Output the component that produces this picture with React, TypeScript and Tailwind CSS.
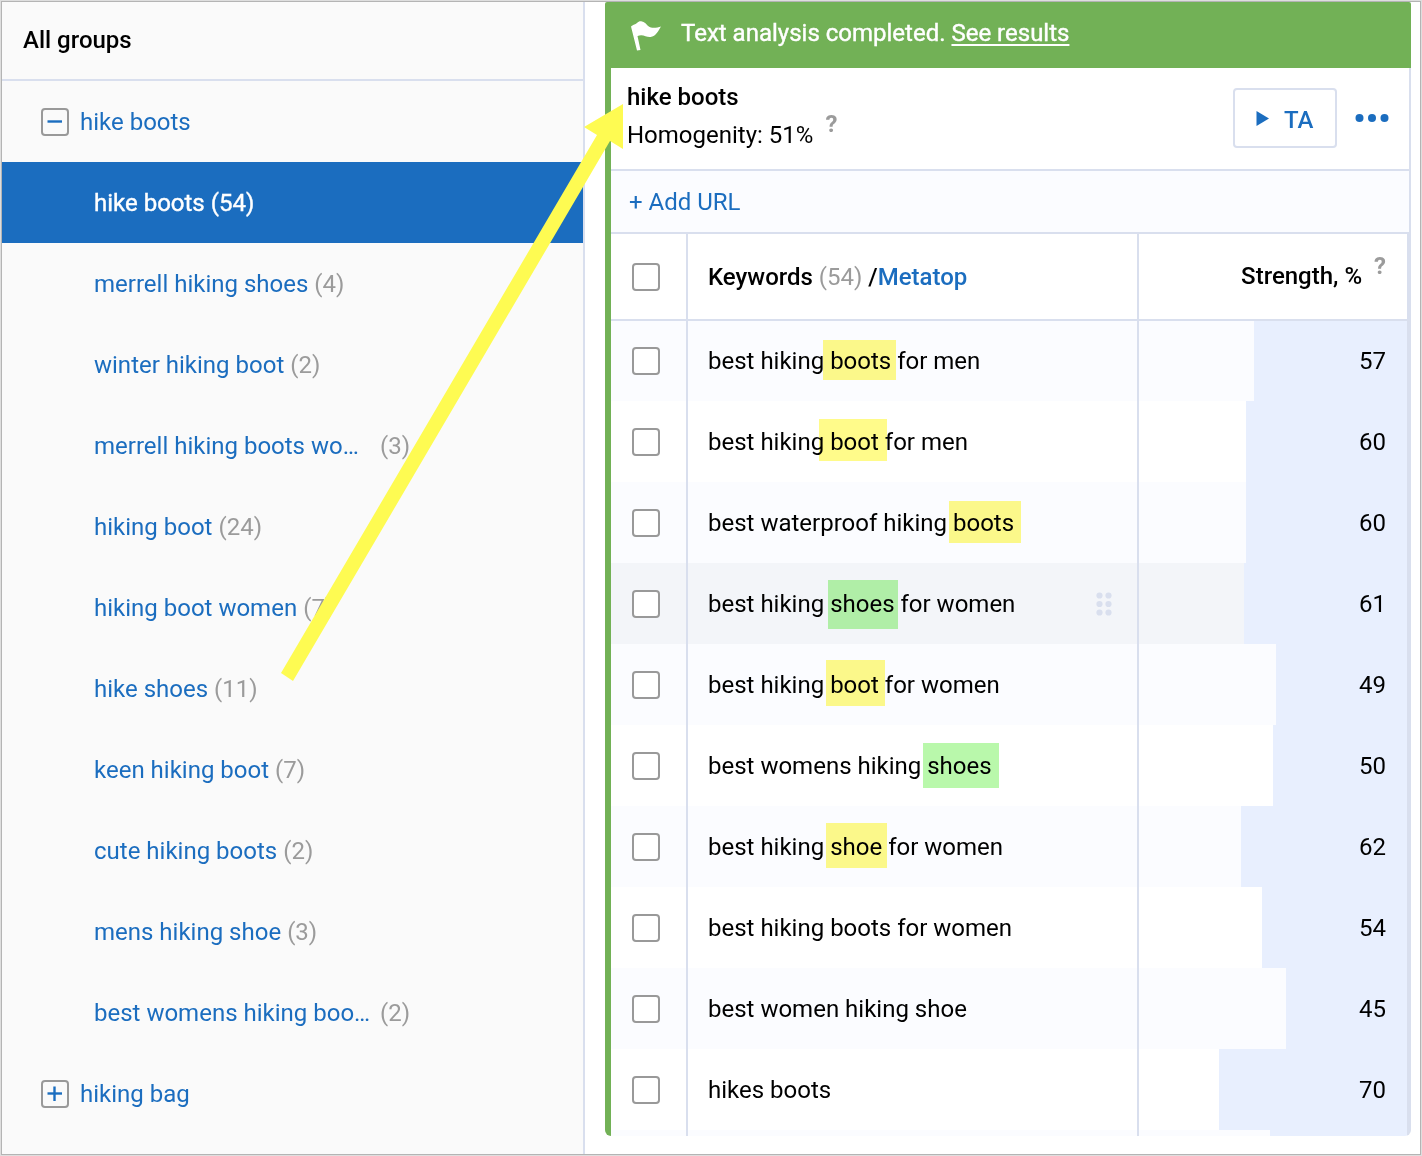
import React from "react";

type Group = { name: string; count: number; clipped?: boolean };

const groups: Group[] = [
  { name: "merrell hiking shoes", count: 4 },
  { name: "winter hiking boot", count: 2 },
  { name: "merrell hiking boots wo…", count: 3, clipped: true },
  { name: "hiking boot", count: 24 },
  { name: "hiking boot women", count: 7 },
  { name: "hike shoes", count: 11 },
  { name: "keen hiking boot", count: 7 },
  { name: "cute hiking boots", count: 2 },
  { name: "mens hiking shoe", count: 3 },
  { name: "best womens hiking boo…", count: 2, clipped: true },
];

type Keyword = { before: string; mark?: string; after?: string; markClass?: string; strength: number; active?: boolean };

const yellow = "bg-[#fffb8a]";
const green = "bg-[#b9f8ab]";

const keywords: Keyword[] = [
  { before: "best hiking ", mark: "boots", after: " for men", markClass: `${yellow} -ml-[7px] -mr-[5px] pl-[7px] pr-[5px] pt-[7px] pb-[5px]`, strength: 57 },
  { before: "best hiking ", mark: "boot", after: " for men", markClass: `${yellow} -ml-[11px] -mr-[8px] pl-[11px] pr-[8px] pt-[9px] pb-[5px]`, strength: 60 },
  { before: "best waterproof hiking ", mark: "boots", markClass: `${yellow} -ml-[4px] pl-[4px] pr-[7px] pt-[8px] pb-[6px]`, strength: 60 },
  { before: "best hiking ", mark: "shoes", after: " for women", markClass: `${green} -ml-[2px] -mr-[3px] pl-[2px] pr-[3px] pt-[10px] pb-[11px]`, strength: 61, active: true },
  { before: "best hiking ", mark: "boot", after: " for women", markClass: `${yellow} -ml-[4px] -mr-[6px] pl-[4px] pr-[6px] pt-[11px] pb-[7px]`, strength: 49 },
  { before: "best womens hiking ", mark: "shoes", markClass: `${green} -ml-[4px] pl-[4px] pr-[7px] pt-[9px] pb-[8px]`, strength: 50 },
  { before: "best hiking ", mark: "shoe", after: " for women", markClass: `${yellow} -ml-[4px] -mr-[5px] pl-[4px] pr-[5px] pt-[10px] pb-[7px]`, strength: 62 },
  { before: "best hiking boots for women", strength: 54 },
  { before: "best women hiking shoe", strength: 45 },
  { before: "hikes boots", strength: 70 },
];

function Toggle({ open, label }: { open: boolean; label: string }) {
  return (
    <button
      type="button"
      aria-label={label}
      aria-expanded={open}
      className="flex size-7 shrink-0 items-center justify-center rounded border-2 border-[#999] text-[#1b6dbf]"
    >
      <svg viewBox="0 0 16 16" className="size-4" stroke="currentColor" strokeWidth="2.4">
        <path d="M0.5 7.500H15" />
        {!open && <path d="M7.500 0.500V15" />}
      </svg>
    </button>
  );
}

function Check({ label }: { label: string }) {
  return (
    <input
      type="checkbox"
      aria-label={label}
      className="mx-auto block size-7 appearance-none rounded border-2 border-[#999] bg-white checked:bg-[#1b6dbf]"
    />
  );
}

function Hint({ label }: { label: string }) {
  return (
    <button type="button" aria-label={label} className="leading-6 font-bold text-[#9b9b9b]">
      ?
    </button>
  );
}

function Sidebar() {
  return (
    <nav aria-label="Groups" className="w-[583px] shrink-0 border-r-2 border-[#d9dfee] bg-[#fafafa] text-[#1b6dbf]">
      <h2 className="h-[79px] border-b-2 border-[#d9dfee] px-[21px] pt-[20px] font-medium leading-9 text-black">All groups</h2>
      <div className="flex h-[81px] items-center gap-[11px] pl-[39px]">
        <Toggle open label="Collapse hike boots" />
        <a href="#hike-boots">hike boots</a>
      </div>
      <ul>
        <li className="flex h-[81px] items-center bg-[#1b6dbf] pl-[92px] text-white">
          <a href="#hike-boots-54" className="[-webkit-text-stroke:0.4px_white]">hike boots (54)</a>
        </li>
        {groups.map((g) => (
          <li key={g.name} className="flex h-[81px] items-center gap-1.5 pl-[92px]">
            <a href="#group" className={g.clipped ? "w-[280px] whitespace-nowrap" : "whitespace-nowrap"}>
              {g.name}
            </a>
            <span className="text-[#9b9b9b]">({g.count})</span>
          </li>
        ))}
      </ul>
      <div className="flex h-[81px] items-center gap-[11px] pl-[39px]">
        <Toggle open={false} label="Expand hiking bag" />
        <a href="#hiking-bag">hiking bag</a>
      </div>
    </nav>
  );
}

function KeywordTable() {
  return (
    <table className="w-full table-fixed border-separate border-spacing-0 border-r-2 border-[#d9dfee]">
      <colgroup>
        <col className="w-[75px]" />
        <col />
        <col className="w-[270px]" />
      </colgroup>
      <thead>
        <tr className="h-[87px]">
          <th className="border-b-2 border-[#d9dfee] p-0 pr-[5px]">
            <Check label="Select all keywords" />
          </th>
          <th className="border-b-2 border-l-2 border-[#d9dfee] p-0 pl-5 text-left font-medium">
            Keywords <span className="font-normal text-[#9b9b9b]">(54)</span> /<a href="#metatop" className="text-[#1b6dbf]">Metatop</a>
          </th>
          <th className="border-b-2 border-l-2 border-[#d9dfee] p-0 pb-0.5 pr-[21px] font-medium">
            <div className="flex items-center justify-end gap-3">
              Strength, %
              <span className="-mt-5 flex">
                <Hint label="About strength" />
              </span>
            </div>
          </th>
        </tr>
      </thead>
      <tbody>
        {keywords.map((k, i) => (
          <tr key={i} className={k.active ? "bg-[#f3f5f9]" : "odd:bg-[#fbfcff]"}>
            <td className="p-0 pr-[5px]">
              <Check label={`Select keyword ${i + 1}`} />
            </td>
            <td className="border-l-2 border-[#d9dfee] p-0 pl-5">
              <div className="flex items-center justify-between pr-[25px]">
                <span className="whitespace-nowrap">
                  {k.before}
                  {k.mark && <mark className={`text-black mix-blend-multiply ${k.markClass}`}>{k.mark}</mark>}
                  {k.after}
                </span>
                {k.active && (
                  <svg viewBox="0 0 16 24" className="h-6 w-4" fill="#d9dfee">
                    {[3.5, 12, 20.5].map((y) => (
                      <g key={y}>
                        <circle cx="3.5" cy={y} r="3.1" />
                        <circle cx="12.5" cy={y} r="3.1" />
                      </g>
                    ))}
                  </svg>
                )}
              </div>
            </td>
            <td className="border-l-2 border-[#d9dfee] p-0">
              <div
                className={`ml-auto flex items-center justify-end bg-[#e8effe] pr-[21px] ${i === 0 ? "h-20" : "h-[81px]"}`}
                style={{ width: `${k.strength}%` }}
              >
                {k.strength}
              </div>
            </td>
          </tr>
        ))}
        <tr aria-hidden="true" className="bg-[#fbfcff]">
          <td className="p-0" />
          <td className="border-l-2 border-[#d9dfee] p-0" />
          <td className="border-l-2 border-[#d9dfee] p-0">
            <div className="ml-auto h-1.5 w-[51%] bg-[#e8effe]" />
          </td>
        </tr>
      </tbody>
    </table>
  );
}

export default function App() {
  return (
    <div className="relative flex min-h-screen border border-[#dedede] font-[Roboto,sans-serif] text-2xl text-black">
      <div className="flex min-w-0 flex-1 border border-[#b4b4b4] bg-white">
        <Sidebar />
        <main className="mb-[18px] ml-5 mr-[9px] min-w-0 flex-1 self-start overflow-hidden rounded-t-xs rounded-b-md border-l-6 border-[#72b156]">
          <div className="flex h-[66px] items-center gap-5 bg-[#72b156] pb-1 pl-5 text-white">
            <svg viewBox="0 0 30 30" className="mt-1.5 size-[30px]" fill="currentColor">
              <path d="M0 5.500C3 3 4 4 6 2C7.500 0.500 9 0 11 0.500C15.500 1.500 16 5.500 20 6.500C23 7.200 27 6.500 30 5.500C27.500 9.500 25 15.500 19.500 16C15 16.500 12 12.500 6.500 15L9.500 29L6 29.500Z" />
            </svg>
            <p className="[-webkit-text-stroke:0.4px_white]">
              Text analysis completed. <a href="#results" className="underline decoration-2 underline-offset-3">See results</a>
            </p>
          </div>
          <div className="border-r-2 border-[#d9dfee]">
            <header className="flex h-[103px] items-start justify-between border-b-2 border-[#d9dfee] pl-4 pr-5 pt-2.5">
              <div className="leading-[38px]">
                <h1 className="font-medium">hike boots</h1>
                <div className="flex items-start gap-3">
                  Homogenity: 51%
                  <span className="-mt-1 flex">
                    <Hint label="About homogenity" />
                  </span>
                </div>
              </div>
              <div className="flex items-center gap-[18px] pt-2.5">
                <button type="button" className="flex h-[60px] w-[104px] items-center gap-[15px] rounded border-2 border-[#d9dfee] pl-[21px] pt-1 font-medium text-[#1b6dbf]">
                  <svg viewBox="0 0 13 15" className="-mt-1 h-[15px] w-[13px]" fill="currentColor">
                    <path d="M0.500 0L13 7.500L0.500 15Z" />
                  </svg>
                  TA
                </button>
                <button type="button" aria-label="More actions" className="text-[#1b6dbf]">
                  <svg viewBox="0 0 34 8" className="h-2 w-[34px]" fill="currentColor">
                    <circle cx="4.500" cy="4" r="4" />
                    <circle cx="17" cy="4" r="4" />
                    <circle cx="29.500" cy="4" r="4" />
                  </svg>
                </button>
              </div>
            </header>
            <div className="flex h-[63px] items-center border-b-2 border-[#d9dfee] bg-[#fbfcff] pl-[18px]">
              <a href="#add-url" className="text-[#1b6dbf]">+ Add URL</a>
            </div>
            <KeywordTable />
          </div>
        </main>
      </div>
      <svg viewBox="0 0 346 582" className="pointer-events-none absolute left-[279px] top-[101px] h-[582px] w-[346px]" fill="#fefb52" aria-hidden="true">
        <path d="M343 2V47L330 39L13 579L1 571L317 33L304 25Z" />
      </svg>
    </div>
  );
}
